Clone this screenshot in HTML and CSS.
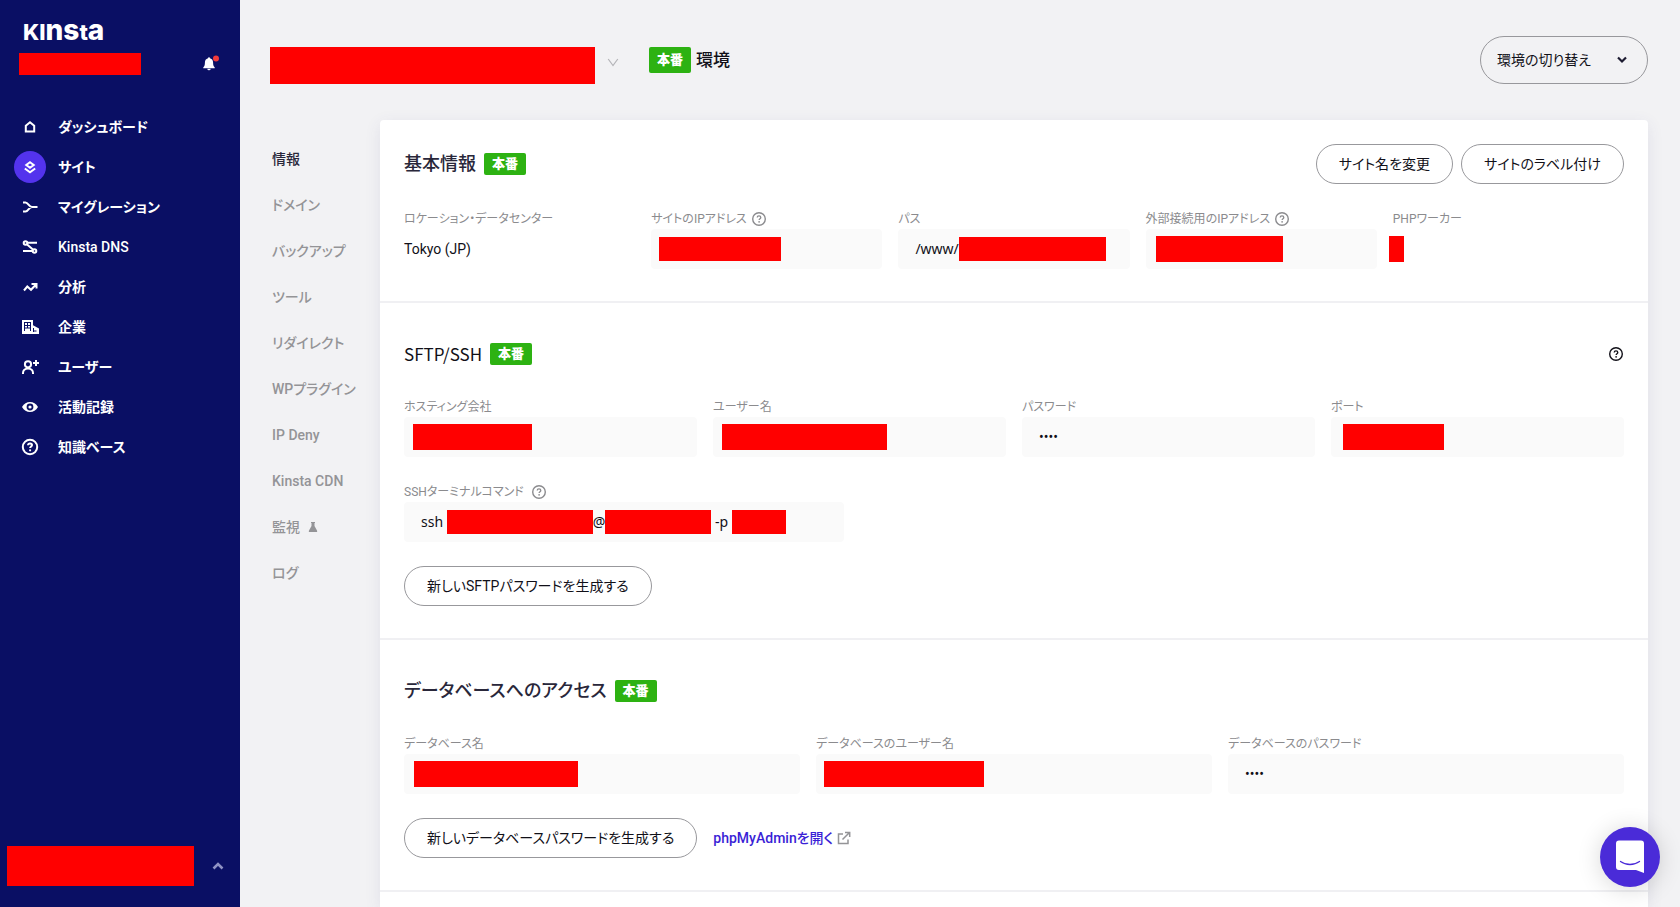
FILE: index.html
```html
<!DOCTYPE html>
<html lang="ja">
<head>
<meta charset="utf-8">
<meta name="viewport" content="width=device-width, initial-scale=1">
<title>サイト情報</title>
<link rel="stylesheet" href="styles.css">
</head>
<body>
<svg class="defs" aria-hidden="true">
  <symbol id="help" viewBox="0 0 16 16"><circle cx="8" cy="8" r="6.3" fill="none" stroke="currentColor" stroke-width="1.4"/><path d="M6.2 6.6c0-1 .8-1.7 1.8-1.7s1.8.6 1.8 1.5c0 1.2-1.7 1.3-1.7 2.6" fill="none" stroke="currentColor" stroke-width="1.3"/><circle cx="8.1" cy="10.8" r=".85" fill="currentColor"/></symbol>
</svg>
<div class="app">
  <aside class="sidebar">
    <a class="logo" href="#" aria-label="Kinsta"><span class="logo-cap">KI</span>ns<span class="logo-cap">t</span>a</a>
    <div class="account">
      <span class="mask mask-account"></span>
      <button class="bell" type="button" aria-label="通知">
        <svg width="18" height="18" viewBox="0 0 18 18"><path d="M7 3.2c-2.2.6-3.1 2.2-3.1 4.5 0 2.4-.4 3.4-1.6 4.5v1h11.4v-1c-1.2-1.1-1.6-2.100-1.600-4.500 0-2.300-.9-3.900-3.100-4.500a1 1 0 0 0-2 0z" fill="#fff"/><path d="M6.300 13.800h3.400a1.700 1.500 0 0 1-3.400 0z" fill="#fff"/><circle cx="15" cy="3.500" r="3" fill="#f23b3b"/></svg>
      </button>
    </div>
    <nav class="nav">
      <a class="nav-item" href="#"><span class="nav-icon"><svg width="20" height="20" viewBox="0 0 20 20"><path d="M5.800 8.800 10 5.300l4.200 3.500v5.600H5.800z"/></svg></span>ダッシュボード</a>
      <a class="nav-item nav-active" href="#"><span class="nav-icon"><svg width="20" height="20" viewBox="0 0 20 20"><path d="m10 5.300 3.700 2.700-3.700 2.700L6.300 8z"/><path d="m4.800 11.500 5.200 3.700 5.200-3.700"/></svg></span>サイト</a>
      <a class="nav-item" href="#"><span class="nav-icon"><svg width="20" height="20" viewBox="0 0 20 20"><path d="M3 5.500h2.500c2.800 0 3.300 4.500 6.500 4.500h5.500M3 14.500h2.500c2.800 0 3.300-4.500 6.500-4.500"/></svg></span>マイグレーション</a>
      <a class="nav-item nav-latin" href="#"><span class="nav-icon"><svg width="20" height="20" viewBox="0 0 20 20"><circle cx="5.500" cy="6" r="1.800"/><circle cx="14.500" cy="14" r="1.800"/><path d="M7.300 5.800H17M3 14h9.700M6.800 7.300l6.400 5.400"/></svg></span>Kinsta DNS</a>
      <a class="nav-item" href="#"><span class="nav-icon"><svg width="20" height="20" viewBox="0 0 20 20"><path d="m4 13.500 3.300-4 3.700 3.300 4.800-5M11.500 7h5v4.500"/></svg></span>分析</a>
      <a class="nav-item" href="#"><span class="nav-icon"><svg width="20" height="20" viewBox="0 0 20 20"><path d="M2 3h11v5.300l6 3.200V17H2z" fill="#fff" stroke="none"/><path d="M4.500 5.500h6M4.500 5v9M10.500 5v9M7.500 5v6M4.500 8.500h6M4.500 11h6M13.500 11v4M13.500 14h3" stroke="#0a0f64" stroke-width="1"/></svg></span>企業</a>
      <a class="nav-item" href="#"><span class="nav-icon"><svg width="20" height="20" viewBox="0 0 20 20"><circle cx="8" cy="7.300" r="3.100"/><path d="M3 17v-1c0-2.500 2-4.500 5-4.500s5 2 5 4.500v1M16 3v6M13 6h6"/></svg></span>ユーザー</a>
      <a class="nav-item" href="#"><span class="nav-icon"><svg width="20" height="20" viewBox="0 0 20 20"><path d="M2 10c2-3.300 4.700-5 8-5s6 1.700 8 5c-2 3.300-4.700 5-8 5s-6-1.700-8-5z" fill="#fff" stroke="none"/><circle cx="10" cy="10" r="2.500" stroke="#0a0f64" stroke-width="1.800"/></svg></span>活動記録</a>
      <a class="nav-item" href="#"><span class="nav-icon"><svg width="20" height="20" viewBox="0 0 20 20"><circle cx="10" cy="10" r="7.200"/><path d="M8 8.300c0-1.100.8-1.900 2-1.900s2 .7 2 1.700c0 1.400-1.900 1.400-1.900 3"/><circle cx="10.100" cy="13.300" r="1.100" fill="#fff" stroke="none"/></svg></span>知識ベース</a>
    </nav>
    <button class="profile" type="button" aria-label="アカウントメニュー">
      <span class="mask mask-profile"></span>
      <svg width="14" height="10" viewBox="0 0 14 10"><path d="m2.500 7.500 4.500-4.500 4.500 4.500" fill="none" stroke="#8f92c4" stroke-width="2.600"/></svg>
    </button>
  </aside>

  <main class="main">
    <header class="header">
      <button class="site-switch" type="button" aria-label="サイトを選択">
        <span class="mask mask-site"></span>
        <svg class="site-arrow" width="12" height="9" viewBox="0 0 12 9"><path d="m1.200 1 4.800 6.500L10.800 1" fill="none" stroke="#b4b4b8" stroke-width="1.200"/></svg>
      </button>
      <div class="env"><span class="badge badge-tall">本番</span>環境</div>
      <div class="env-switch">
        <select class="env-select" aria-label="環境の切り替え"><option>環境の切り替え</option></select>
        <svg class="env-arrow" width="12" height="8" viewBox="0 0 12 8"><path d="m2 1.500 4 4 4-4" fill="none" stroke="#1d1b31" stroke-width="2.200"/></svg>
      </div>
    </header>

    <div class="body">
      <nav class="tabs">
        <a class="tab tab-active" href="#">情報</a>
        <a class="tab" href="#">ドメイン</a>
        <a class="tab" href="#">バックアップ</a>
        <a class="tab" href="#">ツール</a>
        <a class="tab" href="#">リダイレクト</a>
        <a class="tab" href="#">WPプラグイン</a>
        <a class="tab" href="#">IP Deny</a>
        <a class="tab" href="#">Kinsta CDN</a>
        <a class="tab" href="#">監視<svg width="10" height="12" viewBox="0 0 10 12"><path d="M3 1h4v1H6.500v3L9 9.500c.5 1 .1 1.500-.7 1.500H1.700C.9 11 .5 10.500 1 9.500L3.500 5V2H3z" fill="#949497"/></svg></a>
        <a class="tab" href="#">ログ</a>
      </nav>

      <div class="card">
        <section class="section section-first">
          <div class="head">
            <h2 class="title">基本情報</h2><span class="badge">本番</span>
            <div class="head-actions">
              <button class="button" type="button">サイト名を変更</button>
              <button class="button" type="button">サイトのラベル付け</button>
            </div>
          </div>
          <div class="grid grid-five">
            <div class="item"><span class="label">ロケーション・データセンター</span><span class="plain">Tokyo (JP)</span></div>
            <div class="item"><span class="label" id="l-ip">サイトのIPアドレス<svg class="help"><use href="#help"/></svg></span><button class="field inset-8" type="button" aria-labelledby="l-ip"><span class="mask" style="width:122px"></span></button></div>
            <div class="item"><span class="label">パス</span><button class="field humanist" type="button">/www/<span class="mask" style="width:147px"></span></button></div>
            <div class="item"><span class="label" id="l-ext">外部接続用のIPアドレス<svg class="help"><use href="#help"/></svg></span><button class="field inset-10" type="button" aria-labelledby="l-ext"><span class="mask mask-tall" style="width:127px"></span></button></div>
            <div class="item"><span class="label">PHPワーカー</span><span class="plain workers"><span class="mask mask-tall" style="width:15px"></span></span></div>
          </div>
        </section>

        <section class="section">
          <div class="head">
            <h2 class="title title-light">SFTP/SSH</h2><span class="badge">本番</span>
            <button class="help-button" type="button" aria-label="ヘルプ"><svg class="help"><use href="#help"/></svg></button>
          </div>
          <div class="grid grid-four">
            <div class="item"><span class="label" id="l-host">ホスティング会社</span><button class="field inset-9" type="button" aria-labelledby="l-host"><span class="mask mask-tall" style="width:119px"></span></button></div>
            <div class="item"><span class="label" id="l-user">ユーザー名</span><button class="field inset-9" type="button" aria-labelledby="l-user"><span class="mask mask-tall" style="width:165px"></span></button></div>
            <div class="item"><label class="label" for="sftp-pass">パスワード</label><input class="field" id="sftp-pass" value="••••" readonly></div>
            <div class="item"><span class="label" id="l-port">ポート</span><button class="field inset-12" type="button" aria-labelledby="l-port"><span class="mask mask-tall" style="width:101px"></span></button></div>
          </div>
          <div class="item ssh">
            <span class="label label-wide">SSHターミナルコマンド<svg class="help"><use href="#help"/></svg></span>
            <button class="field humanist" type="button">ssh&nbsp;<span class="mask" style="width:146px"></span>@<span class="mask" style="width:106px"></span>&nbsp;-p&nbsp;<span class="mask" style="width:54px"></span></button>
          </div>
          <div class="actions"><button class="button" type="button">新しいSFTPパスワードを生成する</button></div>
        </section>

        <section class="section">
          <div class="head"><h2 class="title">データベースへのアクセス</h2><span class="badge">本番</span></div>
          <div class="grid grid-three">
            <div class="item"><span class="label" id="l-db">データベース名</span><button class="field inset-10" type="button" aria-labelledby="l-db"><span class="mask mask-tall" style="width:164px"></span></button></div>
            <div class="item"><span class="label" id="l-dbu">データベースのユーザー名</span><button class="field inset-8" type="button" aria-labelledby="l-dbu"><span class="mask mask-tall" style="width:160px"></span></button></div>
            <div class="item"><label class="label" for="db-pass">データベースのパスワード</label><input class="field" id="db-pass" value="••••" readonly></div>
          </div>
          <div class="actions">
            <button class="button" type="button">新しいデータベースパスワードを生成する</button>
            <a class="link" href="#">phpMyAdminを開く<svg width="14" height="14" viewBox="0 0 14 14"><path d="M6 3H1.500v9.500h9.500V8.500M5.500 8.500l7-7M8 1.500h4.700V6" fill="none" stroke="#949497" stroke-width="1.500"/></svg></a>
          </div>
        </section>
      </div>
    </div>
  </main>
</div>
<button class="chat" type="button" aria-label="チャット">
  <svg width="30" height="34" viewBox="0 0 30 34"><path d="M4 .5h22a3 3 0 0 1 3 3V33l-8-3H4a3 3 0 0 1-3-3V3.500a3 3 0 0 1 3-3z" fill="#fff"/><path d="M5.500 21.500c5.500 4 13.500 4 19 0" fill="none" stroke="#4a2bd8" stroke-width="1.300" stroke-linecap="round"/></svg>
</button>
</body>
</html>
```

FILE: styles.css
```css
* { box-sizing: border-box; }

body {
  margin: 0;
  background: #f2f2f4;
  color: #111018;
  font: 400 14px/20px Roboto, "Noto Sans CJK JP", sans-serif;
  font-feature-settings: "palt";
}

a { color: inherit; text-decoration: none; }

button, input, select {
  margin: 0;
  padding: 0;
  border: 0;
  background: none;
  color: inherit;
  font: inherit;
  font-feature-settings: inherit;
}

svg { flex: none; display: block; }
.defs { position: absolute; width: 0; height: 0; }

.app { display: flex; height: 100vh; overflow: hidden; }

.mask { flex: none; display: block; height: 24px; background: #f00; }
.mask-tall { height: 26px; }

/* sidebar */
.sidebar {
  flex: none;
  display: flex;
  flex-direction: column;
  width: 240px;
  padding: 18px 0 21px;
  background: #0a0f64;
  color: #fff;
}

.logo {
  height: 26px;
  padding-left: 23px;
  font: 800 28px/24px Inter, sans-serif;
}
.logo-cap { font-size: 22px; }

.account {
  display: flex;
  align-items: center;
  justify-content: space-between;
  height: 40px;
  padding: 0 21px 0 19px;
}
.mask-account { width: 122px; height: 22px; }

.nav { margin-top: 23px; }
.nav-item {
  display: flex;
  align-items: center;
  gap: 12px;
  height: 40px;
  padding-left: 14px;
  font-weight: 700;
}
.nav-latin { font-weight: 500; }
.nav-icon {
  display: flex;
  align-items: center;
  justify-content: center;
  width: 32px;
  height: 32px;
  border-radius: 50%;
}
.nav-icon svg { fill: none; stroke: #fff; stroke-width: 2; }
.nav-active .nav-icon { background: #5333ed; }

.profile {
  display: flex;
  align-items: center;
  gap: 17px;
  margin-top: auto;
  padding-left: 7px;
}
.mask-profile { width: 187px; height: 40px; }

/* header */
.main {
  flex: 1;
  display: flex;
  flex-direction: column;
  min-width: 0;
  padding: 36px 32px 0 30px;
}
.header { display: flex; align-items: center; height: 48px; }
.site-switch { display: flex; align-items: flex-start; gap: 12px; padding-top: 10px; }
.site-arrow { margin-top: 11px; }
.mask-site { width: 325px; height: 37px; }
.env {
  display: flex;
  align-items: center;
  gap: 5px;
  margin-left: 30px;
  font-size: 17px;
  font-weight: 500;
}

.badge {
  flex: none;
  padding: 0 8px;
  border-radius: 2px;
  background: #2db212;
  color: #fff;
  font-size: 13px;
  font-weight: 900;
  line-height: 22px;
}
.badge-tall { line-height: 26px; }

.env-switch { position: relative; margin-left: auto; }
.env-select {
  appearance: none;
  width: 168px;
  height: 48px;
  padding: 0 16px;
  border: 1px solid #98989c;
  border-radius: 24px;
}
.env-arrow { position: absolute; right: 20px; top: 20px; pointer-events: none; }

/* body */
.body { flex: 1; display: flex; margin-top: 36px; }
.tabs {
  flex: none;
  display: flex;
  flex-direction: column;
  width: 110px;
  padding: 16px 0 0 2px;
  color: #949497;
  font-weight: 500;
}
.tab { display: flex; align-items: center; gap: 8px; height: 46px; white-space: nowrap; }
.tab-active { color: #29273a; }

.card {
  flex: 1;
  min-width: 0;
  border-radius: 4px 4px 0 0;
  background: #fff;
  box-shadow: 0 4px 16px rgba(70, 70, 140, 0.1);
}
.section { padding: 40px 24px 32px; border-bottom: 2px solid #f0f0f3; }
.section-first { padding-top: 24px; }

.head { display: flex; align-items: center; gap: 8px; height: 22px; margin-bottom: 32px; }
.section-first .head { height: 40px; margin-bottom: 25px; }
.title { margin: 0; color: #29273a; font-size: 18px; font-weight: 500; line-height: 22px; }
.title-light { font-family: "Noto Sans CJK JP", sans-serif; font-size: 17px; font-weight: 400; color: #111018; }
.head-actions { display: flex; gap: 8px; margin-left: auto; }
.help-button { margin-left: auto; }

.grid { display: grid; gap: 16px; }
.grid-five { grid-template-columns: repeat(5, minmax(0, 1fr)); }
.grid-four { grid-template-columns: repeat(4, minmax(0, 1fr)); }
.grid-three { grid-template-columns: repeat(3, minmax(0, 1fr)); }

.label {
  display: flex;
  align-items: center;
  gap: 4px;
  height: 20px;
  color: #8b8b8e;
  font-size: 12px;
}
.label-wide { gap: 7px; }
.help { width: 16px; height: 16px; }

.field {
  display: flex;
  align-items: center;
  width: 100%;
  height: 40px;
  padding: 0 17px;
  border-radius: 4px;
  background: #fafafa;
}
.inset-8 { padding: 0 8px; }
.inset-9 { padding: 0 9px; }
.inset-10 { padding: 0 10px; }
.inset-12 { padding: 0 12px; }
.humanist { font-family: "Noto Sans", "Noto Sans CJK JP", sans-serif; }
.plain { display: flex; align-items: center; height: 40px; }
.workers { margin-left: -4px; }

.ssh { max-width: 440px; margin-top: 25px; }

.actions { display: flex; align-items: center; gap: 16px; margin-top: 24px; }
.button {
  height: 40px;
  padding: 0 22px;
  border: 1px solid #98989c;
  border-radius: 20px;
  white-space: nowrap;
}
.link { display: flex; align-items: center; gap: 4px; color: #3a1fd6; font-weight: 500; }

.chat {
  position: fixed;
  right: 20px;
  bottom: 20px;
  display: flex;
  align-items: center;
  justify-content: center;
  width: 60px;
  height: 60px;
  border-radius: 50%;
  background: #4a2bd8;
  box-shadow: 0 2px 24px rgba(0, 0, 0, 0.16);
}
```
